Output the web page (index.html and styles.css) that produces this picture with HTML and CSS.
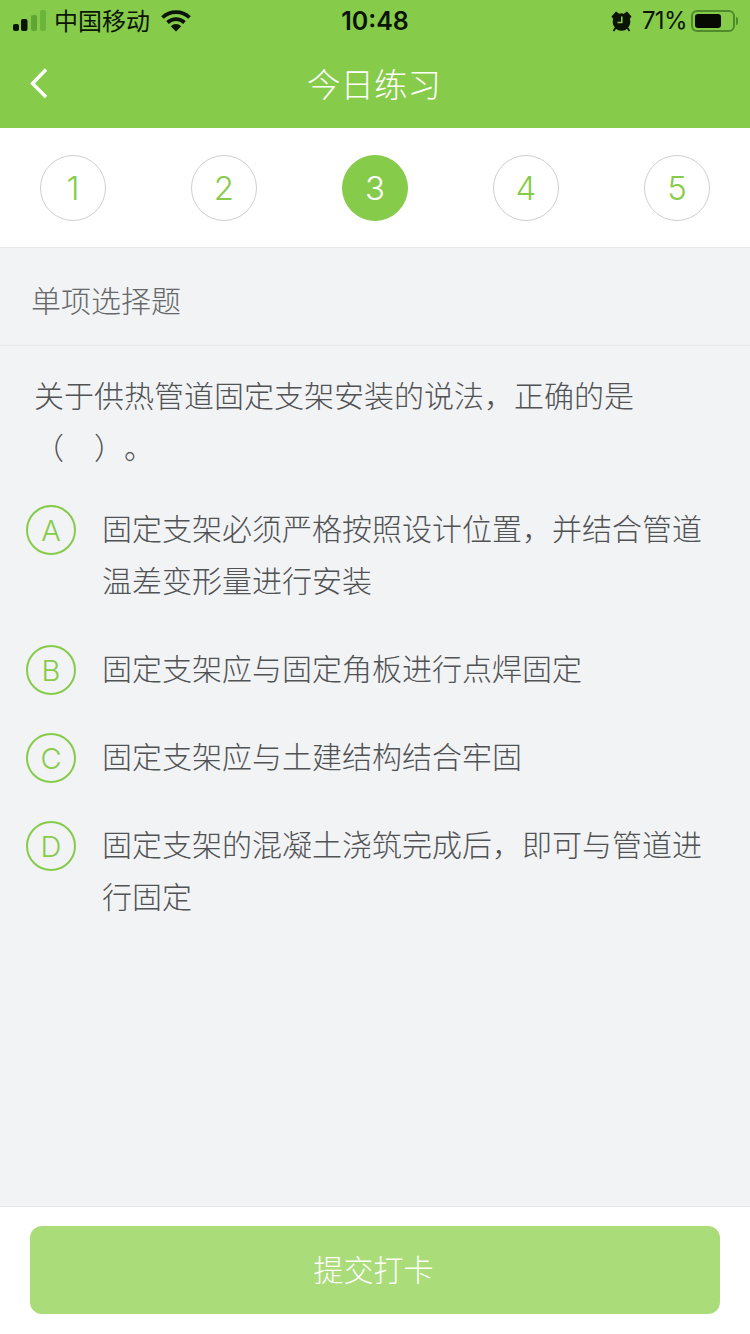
FILE: index.html
```html
<!DOCTYPE html>
<html lang="zh-CN">
<head>
<meta charset="utf-8">
<title>今日练习</title>
<link rel="stylesheet" href="styles.css">
</head>
<body>
<div class="page">
  <header class="header">
    <div class="status">
      <div class="status-left">
        <svg class="signal" width="34" height="22" viewBox="0 0 34 22">
          <rect x="0" y="14" width="6" height="7" rx="2" fill="#0b1505"/>
          <rect x="8" y="9" width="6.5" height="12" rx="2" fill="#0b1505"/>
          <rect x="18" y="5" width="6" height="16" rx="2" fill="#5ea533"/>
          <rect x="27" y="0" width="6" height="21" rx="2" fill="#6bb53c"/>
        </svg>
        <span class="carrier">中国移动</span>
        <svg class="wifi" width="30" height="22" viewBox="0 0 30 22">
          <path d="M1.5 7.5a19.5 19.5 0 0 1 27 0" fill="none" stroke="#0b1505" stroke-width="3.8"/>
          <path d="M6.5 12.5a12.5 12.5 0 0 1 17 0" fill="none" stroke="#0b1505" stroke-width="3.8"/>
          <path d="M9.8 16.2a7.5 7.5 0 0 1 10.4 0L15 21.5z" fill="#0b1505"/>
        </svg>
      </div>
      <div class="time">10:48</div>
      <div class="status-right">
        <svg class="alarm" width="21" height="22" viewBox="0 0 21 22">
          <circle cx="10.5" cy="12" r="8.8" fill="#0b1505"/>
          <path d="M0.5 6.5l4.5-5 3 2-5.8 5.5zM20.5 6.5l-4.5-5-3 2 5.8 5.5z" fill="#0b1505"/>
          <path d="M4.5 18l-2 3M16.5 18l2 3" stroke="#0b1505" stroke-width="1.8"/>
          <path d="M10.8 6.5v6H6.5" fill="none" stroke="#87cb4b" stroke-width="1.6"/>
        </svg>
        <span class="pct">71%</span>
        <div class="battery"><div class="battery-fill"></div></div>
        <div class="battery-nub"></div>
      </div>
    </div>
    <nav class="nav">
      <svg class="back" width="20" height="32" viewBox="0 0 20 32">
        <path d="M17 2.5L3.5 16.5 17 30" fill="none" stroke="#fff" stroke-width="3.4"/>
      </svg>
      <h1 class="title">今日练习</h1>
    </nav>
  </header>

  <section class="steps">
    <div class="step">1</div>
    <div class="step">2</div>
    <div class="step step-active">3</div>
    <div class="step">4</div>
    <div class="step">5</div>
  </section>

  <main class="body">
    <div class="type">单项选择题</div>
    <p class="question">关于供热管道固定支架安装的说法，正确的是<br>（&emsp;）。</p>
    <div class="options">
      <div class="option"><span class="letter">A</span><p class="option-text">固定支架必须严格按照设计位置，并结合管道温差变形量进行安装</p></div>
      <div class="option"><span class="letter">B</span><p class="option-text">固定支架应与固定角板进行点焊固定</p></div>
      <div class="option"><span class="letter">C</span><p class="option-text">固定支架应与土建结构结合牢固</p></div>
      <div class="option"><span class="letter">D</span><p class="option-text">固定支架的混凝土浇筑完成后，即可与管道进行固定</p></div>
    </div>
  </main>

  <footer class="footer">
    <button class="submit" type="button">提交打卡</button>
  </footer>
</div>
</body>
</html>
```

FILE: styles.css
```css
* { box-sizing: border-box; }
html, body { margin: 0; padding: 0; }
body {
  font-family: "Noto Sans CJK SC", "Liberation Sans", sans-serif;
  background: #f2f3f5;
  text-spacing-trim: space-all;
}
.page {
  width: 750px;
  height: 1334px;
  display: flex;
  flex-direction: column;
  overflow: hidden;
}
.header { height: 128px; background: #87cb4b; flex: none; }
.status {
  height: 40px;
  display: grid;
  grid-template-columns: 1fr auto 1fr;
  align-items: center;
  color: #0b1505;
}
.status-left { display: flex; align-items: center; padding-left: 13px; }
.carrier { font-size: 24px; line-height: 38px; margin-left: 7px; margin-bottom: 2px; font-weight: 400; }
.wifi { margin-left: 11px; }
.time { font-family: Inter, "Liberation Sans", sans-serif; font-size: 25px; font-weight: 600; line-height: 40px; }
.status-right { display: flex; align-items: center; justify-content: flex-end; padding-right: 12px; }
.alarm { margin-right: 10px; }
.pct { font-family: Inter, "Liberation Sans", sans-serif; font-size: 24px; line-height: 42px; margin-right: 4px; letter-spacing: -0.6px; }
.battery {
  width: 44px;
  height: 22px;
  border: 2px solid #4f8a2c;
  border-radius: 6px;
  padding: 2px;
}
.battery-fill { width: 26px; height: 14px; background: #060a03; border-radius: 3px; }
.battery-nub { width: 2px; height: 8px; margin-left: 1px; background: #4f8a2c; border-radius: 0 2px 2px 0; }
.nav {
  height: 88px;
  display: flex;
  align-items: center;
  justify-content: center;
  position: relative;
}
.back { position: absolute; left: 29px; top: 0; bottom: 0; margin: auto 0; transform: translateY(-1px); }
.title { margin: 0 2px 2px 0; font-size: 33.5px; line-height: 84px; font-weight: 300; color: #fff; }
.steps {
  height: 120px;
  flex: none;
  background: #fff;
  border-bottom: 1px solid #e6e7e9;
  padding: 0 40px;
  display: flex;
  justify-content: space-between;
  align-items: center;
}
.step {
  width: 66px;
  height: 66px;
  margin-top: 1px;
  border: 1px solid #cfcfcf;
  border-radius: 50%;
  display: flex;
  align-items: center;
  justify-content: center;
  font-family: Inter, "Liberation Sans", sans-serif;
  font-size: 33px;
  font-weight: 350;
  color: #87cb4b;
}
.step-active { background: #87cb4b; border-color: #87cb4b; color: #fff; }
.body { flex: 1; background: #f2f3f5; }
.type {
  height: 98px;
  padding-left: 31px;
  border-bottom: 1px solid #e6e7e9;
  font-size: 30px;
  font-weight: 300;
  line-height: 102px;
  color: #666869;
}
.question {
  margin: 0;
  padding: 22px 34px 0 34px;
  font-size: 30px;
  font-weight: 300;
  line-height: 52px;
  color: #505254;
}
.options {
  padding: 29px 30px 0 26px;
  display: flex;
  flex-direction: column;
  gap: 36px;
}
.option { display: flex; align-items: flex-start; }
.letter {
  flex: none;
  width: 50px;
  height: 50px;
  margin: 4px 26px -2px 0;
  border: 2px solid #87cb4b;
  border-radius: 50%;
  display: flex;
  align-items: center;
  justify-content: center;
  font-family: Inter, "Liberation Sans", sans-serif;
  font-size: 29px;
  font-weight: 350;
  color: #87cb4b;
}
.option-text {
  margin: 0;
  font-size: 30px;
  font-weight: 300;
  line-height: 52px;
  color: #505254;
}
.footer {
  height: 128px;
  flex: none;
  background: #fff;
  border-top: 1px solid #e6e7e9;
  padding: 19px 30px 0;
}
.submit {
  display: block;
  width: 690px;
  height: 88px;
  padding: 0 3px 4px 0;
  border: 0;
  border-radius: 12px;
  background: #abdc7a;
  color: #fff;
  font-family: inherit;
  font-size: 30px;
  font-weight: 300;
  letter-spacing: 0;
}
```
